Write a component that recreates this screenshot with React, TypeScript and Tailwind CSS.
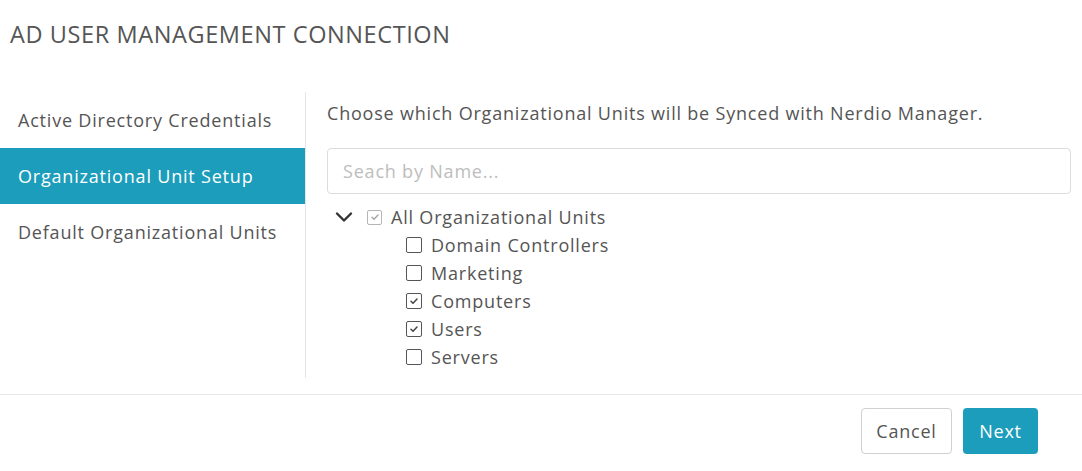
import { useState } from "react";

type Unit = { name: string; checked: boolean };

const initialUnits: Unit[] = [
  { name: "Domain Controllers", checked: false },
  { name: "Marketing", checked: false },
  { name: "Computers", checked: true },
  { name: "Users", checked: true },
  { name: "Servers", checked: false },
];

const steps = [
  "Active Directory Credentials",
  "Organizational Unit Setup",
  "Default Organizational Units",
];

function Box({ checked, muted }: { checked: boolean; muted?: boolean }) {
  return (
    <span
      className={`inline-flex shrink-0 items-center justify-center rounded-[2px] ${
        muted
          ? "h-[15px] w-[15px] border-[1.5px] border-[#b5b5b5]"
          : "h-[16px] w-[16px] border-[1.8px] border-[#555]"
      }`}
    >
      {checked && (
        <svg width="10" height="10" viewBox="0 0 10 10" fill="none">
          <path
            d="M2 5.2l2 2L8 3"
            stroke={muted ? "#a8a8a8" : "#444"}
            strokeWidth="1.5"
            strokeLinecap="round"
            strokeLinejoin="round"
          />
        </svg>
      )}
    </span>
  );
}

export default function App() {
  const [units, setUnits] = useState(initialUnits);
  const [open, setOpen] = useState(true);
  const active = 1;

  function toggle(i: number) {
    setUnits((u) => u.map((x, j) => (j === i ? { ...x, checked: !x.checked } : x)));
  }

  return (
    <div
      className="h-[471px] w-[1082px] bg-white tracking-[0.8px] text-[#555]"
      style={{ fontFamily: '"Open Sans", sans-serif' }}
    >
      <div className="flex h-[70px] items-center pl-[10px]">
        <h1 className="text-[23.5px] font-normal tracking-[0.6px] text-[#555]">
          AD USER MANAGEMENT CONNECTION
        </h1>
      </div>

      <div className="mt-[22px] flex h-[286px]">
        <nav className="w-[306px] shrink-0 border-r border-[#e5e5e5]">
          {steps.map((s, i) => (
            <div
              key={s}
              className={`flex h-[56px] items-center pl-[18px] text-[18px] ${
                i === active ? "bg-[#1c9dbb] text-white" : "text-[#555]"
              }`}
            >
              {s}
            </div>
          ))}
        </nav>

        <div className="flex-1 pl-[21px] pr-[11px]">
          <p className="flex h-[44px] items-center pb-[2px] text-[18px] text-[#555]">
            Choose which Organizational Units will be Synced with Nerdio Manager.
          </p>
          <input
            placeholder="Seach by Name..."
            className="mt-[12px] h-[46px] w-full rounded-[4px] border border-[#dcdcdc] px-[15px] text-[18px] tracking-[0.8px] text-[#555] outline-none placeholder:text-[#bdbdbd]"
          />

          <div className="mt-[9px] text-[18px]">
            <div className="flex h-[28px] items-center">
              <button
                onClick={() => setOpen(!open)}
                className="ml-[8px] mr-[14px] flex h-[18px] w-[18px] items-center justify-center"
              >
                <svg width="18" height="12" viewBox="0 0 18 12" fill="none">
                  <path
                    d={open ? "M2 2.5l7 7 7-7" : "M6 1l6 5-6 5"}
                    stroke="#333"
                    strokeWidth="2.4"
                    strokeLinecap="round"
                    strokeLinejoin="round"
                  />
                </svg>
              </button>
              <Box checked muted />
              <span className="ml-[9px]">All Organizational Units</span>
            </div>
            {open &&
              units.map((u, i) => (
                <label
                  key={u.name}
                  onClick={() => toggle(i)}
                  className="flex h-[28px] cursor-pointer items-center pl-[79px]"
                >
                  <Box checked={u.checked} />
                  <span className="ml-[9px]">{u.name}</span>
                </label>
              ))}
          </div>
        </div>
      </div>

      <div className="mt-[16px] flex justify-end gap-[11px] border-t border-[#e8e8e8] pr-[44px] pt-[13px]">
        <button className="h-[46px] w-[91px] rounded-[4px] border border-[#d0d0d0] bg-white text-[18px] tracking-[0.8px] text-[#555]">
          Cancel
        </button>
        <button className="h-[46px] w-[75px] rounded-[4px] bg-[#1c9dbb] text-[18px] tracking-[0.8px] text-white">
          Next
        </button>
      </div>
    </div>
  );
}
